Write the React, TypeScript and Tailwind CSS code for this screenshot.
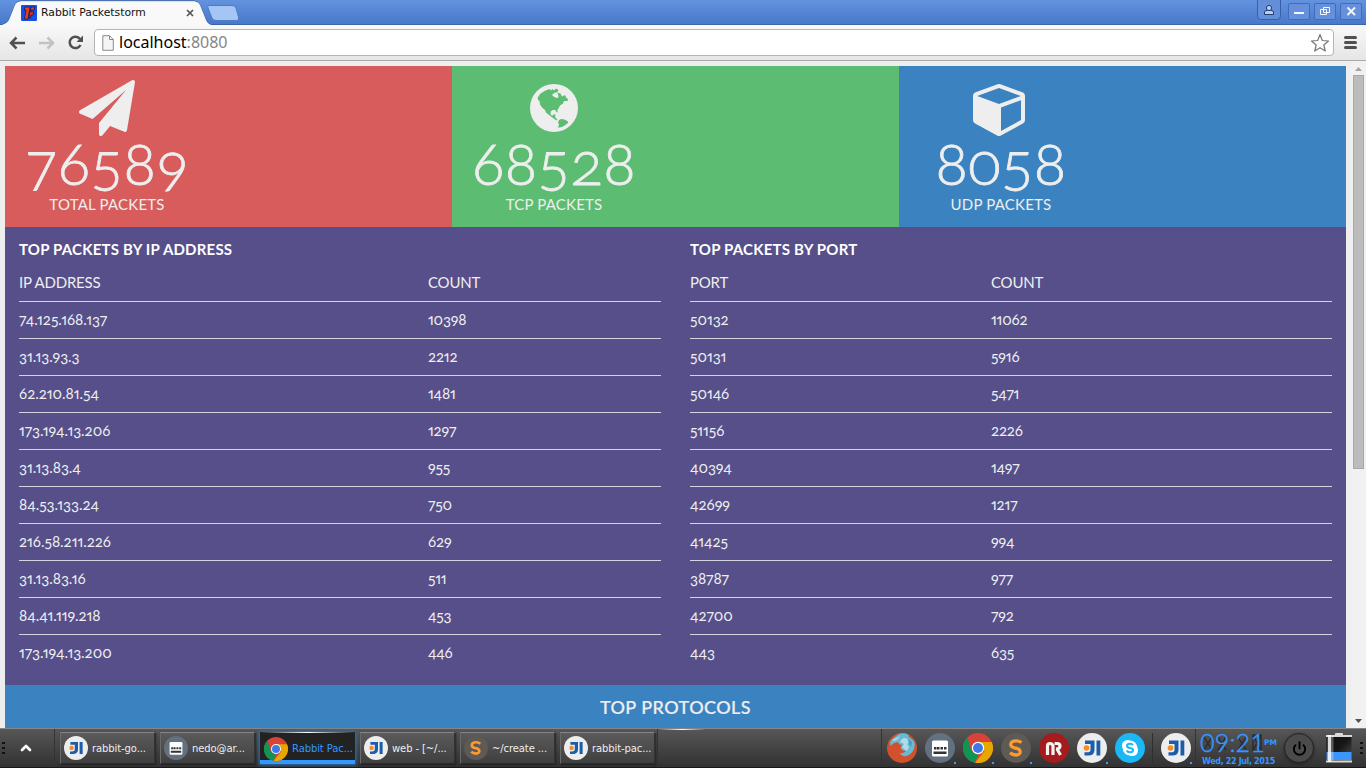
import type { ReactNode } from "react";
import { ChevronUp, Power } from "lucide-react";

const ipRows = [
  ["74.125.168.137", "10398"],
  ["31.13.93.3", "2212"],
  ["62.210.81.54", "1481"],
  ["173.194.13.206", "1297"],
  ["31.13.83.4", "955"],
  ["84.53.133.24", "750"],
  ["216.58.211.226", "629"],
  ["31.13.83.16", "511"],
  ["84.41.119.218", "453"],
  ["173.194.13.200", "446"],
];

const portRows = [
  ["50132", "11062"],
  ["50131", "5916"],
  ["50146", "5471"],
  ["51156", "2226"],
  ["40394", "1497"],
  ["42699", "1217"],
  ["41425", "994"],
  ["38787", "977"],
  ["42700", "792"],
  ["443", "635"],
];

function PlaneIcon() {
  return (
    <svg viewBox="0 0 1792 1792" className="h-14 w-14" fill="#eee">
      <path d="M1764 11q33 24 27 64l-256 1536q-5 29-32 45-14 8-31 8-11 0-24-5l-453-185-242 295q-18 23-49 23-13 0-22-4-19-7-30.500-23.500t-11.500-36.500v-349l864-1059-1069 925-395-162q-37-14-40-55-2-40 32-59l1664-960q15-9 32-9 20 0 36 11z" />
    </svg>
  );
}

function GlobeIcon() {
  return (
    <svg viewBox="0 0 48 48" className="mt-1 mb-1 h-12 w-12">
      <circle cx="24" cy="24" r="24" fill="#eee" />
      <path
        fill="#5cbd72"
        d="M7.500 14L10 10L14.500 7L17 6L19.500 5L21 6.500L22.500 5L24 6.500L26 4.500L28.500 6L27.500 8L24 9L22 11L23.500 12.500L26.500 14L28.500 13.500L28 10L27 8.500L30.500 9.500L32 12.500L35 11L36.500 14L38 15L37.500 17L34 17L33 19.500L30 21.500L28.500 24.500L27.500 25.500L27.500 28.500L26.300 28L25.500 26L22.500 26L20.700 27.500L20.500 30.500L22.300 31.700L24 30.300L25.500 30.500L25 33L27.300 35.500L26.500 36.500L23 34L19 31L16 28.500L15 26L12 23.500L10 20.500L9.500 17L8.500 16.500Z"
      />
      <path fill="#5cbd72" d="M29 36L31 35L34.500 35.500L38 37.500L38 39L34.500 41.500L32 43L28 43.800L29 40.500L28 38.500Z" />
    </svg>
  );
}

function CubeIcon() {
  return (
    <svg viewBox="0 0 1792 1792" className="h-14 w-14" fill="#eee">
      <path d="M896 1629l640-349v-636l-640 233v752zm-64-865l698-254-698-254-698 254zm832-252v768q0 35-18 65t-49 47l-704 384q-28 16-61 16t-61-16l-704-384q-31-17-49-47t-18-65v-768q0-40 23-73t61-47l704-256q22-8 44-8t44 8l704 256q38 14 61 47t23 73z" />
    </svg>
  );
}

function Stat({ icon, value, label, color }: { icon: ReactNode; value: string; label: string; color: string }) {
  return (
    <div className={`h-[161px] w-[447px] ${color}`}>
      <div className="flex w-[204px] flex-col items-center pt-3.5 text-[#eee]">
        {icon}
        <div className="-mt-[3px] h-[60px] text-[60px] leading-[58px] font-light tracking-[0.4px] oldstyle-nums [-webkit-text-stroke:0.8px_#eee]">{value}</div>
        <div className="mt-px text-[15px] leading-5 tracking-[0.2px]">{label}</div>
      </div>
    </div>
  );
}

function PacketTable({ title, heads, rows, first }: { title: string; heads: string[]; rows: string[][]; first: string }) {
  return (
    <div className="w-[642px]">
      <h2 className="h-[38px] pt-3 text-[15px] leading-5 font-bold tracking-[0.2px] text-white">{title}</h2>
      <div className="flex h-[37px] items-center border-b border-[#d5d3df] pb-[2px] text-[15px] tracking-[-0.2px]">
        <div className={first}>{heads[0]}</div>
        <div>{heads[1]}</div>
      </div>
      {rows.map((r) => (
        <div key={r[0]} className="flex h-[37px] items-center border-b border-[#d5d3df] pb-px text-[15px] oldstyle-nums proportional-nums last:border-transparent">
          <div className={`${first} tracking-[-0.05px]`}>{r[0]}</div>
          <div className="tracking-[-0.2px]">{r[1]}</div>
        </div>
      ))}
    </div>
  );
}

function AppIcon({ kind, size }: { kind: string; size: string }) {
  return (
    <svg viewBox="0 0 30 30" className={`shrink-0 ${size}`}>
      {kind === "idea" && (
        <g>
          <circle cx="15" cy="15" r="15" fill="#ededed" />
          <path d="M8 7.500H17.500V17Q17.500 23 10 22.500H7.500V19.300H10Q13.500 19.300 13.500 17V11H8ZM19.500 7.500H23.300V22.500H19.500Z" fill="#1a5dab" />
          <circle cx="9.500" cy="15" r="2.800" fill="#f78b28" />
        </g>
      )}
      {kind === "term" && (
        <g>
          <circle cx="15" cy="15" r="15" fill="#63707f" />
          <rect x="7" y="7.500" width="16" height="16" rx="1.500" fill="#fff" />
          <path d="M9 16.500h2.500v-2.500h-2.500zM12 16.500h2.500v-2.500h-2.500zM15.500 16.500h2.500v-2.500h-2.500zM19 16.500h2.500v-2.500h-2.500zM8.500 18.500h13v2.500h-13z" fill="#333" />
        </g>
      )}
      {kind === "chrome" && (
        <g>
          <circle cx="15" cy="15" r="15" fill="#d94337" />
          <path d="M4.500 4.300L8.500 18.500L15 22L12 29.700A15 15 0 0 1 4.500 4.300Z" fill="#109451" />
          <path d="M15 9H28.700A15 15 0 0 1 12 29.700L21.500 18Z" fill="#e6a800" />
          <circle cx="15" cy="15" r="6.200" fill="#fff" />
          <circle cx="15" cy="15" r="5" fill="#3c79ea" />
        </g>
      )}
      {kind === "sublime" && (
        <g>
          <circle cx="15" cy="15" r="15" fill="#5e5a55" />
          <path d="M20.500 9.500Q18 7.800 15 7.800C8.500 7.800 8 14 14 15C21 16 20.500 22 15 22Q11.500 22 9 19.800" fill="none" stroke="#fb9b31" strokeWidth="3.300" />
        </g>
      )}
      {kind === "mendeley" && (
        <g>
          <circle cx="15" cy="15" r="15" fill="#a61b1b" />
          <path d="M8.500 22V13Q8.500 10.500 11 10.500T14 13V22M15.500 10.500H18Q21 10.500 21 13T18 16H17M18 16L21.500 22" fill="none" stroke="#f4f4f4" strokeWidth="3.200" />
        </g>
      )}
      {kind === "firefox" && (
        <g>
          <circle cx="15" cy="15" r="15" fill="#d1512d" />
          <path d="M3 9Q7 4 12 1Q17 -.500 21 1.500L22 4L27 8Q29 13 26 18Q22 24 16 23L12.500 20.500L16 20L19 18L16 17.500L13.500 15L15 12L12 11L11 9L7 10L3.500 13Z" fill="#67bad3" />
          <path d="M15 6Q18 4 20 6L22 9L20 11L22 14L20 18L17 16L15 14L17 11L13 9Z" fill="#b0dcea" />
          <path d="M5 7L13 3L11 6L7 8Z" fill="#a5dcea" />
          <path d="M21 6L25 9L24 14L22 11Z" fill="#489dbd" />
        </g>
      )}
      {kind === "skype" && (
        <g>
          <circle cx="15" cy="15" r="15" fill="#1cb7f5" />
          <circle cx="12.500" cy="12.500" r="5.500" fill="#fff" />
          <circle cx="17.500" cy="17.500" r="5.500" fill="#fff" />
          <circle cx="15" cy="15" r="7.400" fill="#fff" />
          <path d="M18 12Q17 10.800 15 10.800C11 10.800 11 14.300 15 15C19 15.600 19 19.200 15 19.200Q12.500 19.200 11.700 17.500" fill="none" stroke="#1cb7f5" strokeWidth="2" />
        </g>
      )}
    </svg>
  );
}

function Task({ kind, text, active }: { kind: string; text: string; active?: boolean }) {
  return (
    <div
      className={
        active
          ? "flex h-8 w-[95px] flex-col bg-[#222] text-[#3497ff] shadow-[0_0_3px_1px_#2472bd]"
          : "flex h-8 w-[95px] items-center gap-1 border border-t-[#858585] border-r-[#333] border-b-[#2b2b2b] border-l-[#6a6a6a] bg-linear-to-b from-[#5b5b5b] to-[#3f3f3f] pl-[3px] text-[#eee] shadow-[1px_1px_2px_#222]"
      }
    >
      {active ? (
        <>
          <div className="h-px bg-linear-to-r from-transparent via-white to-transparent" />
          <div className="z-10 flex h-[27px] items-center gap-1 pl-1">
            <AppIcon kind={kind} size="mt-1 h-6 w-6" />
            <span className="pt-1 font-['DejaVu_Sans'] text-[10px] tracking-[-0.1px] whitespace-nowrap">{text}</span>
          </div>
          <div className="h-1 bg-[#3497ff]" />
        </>
      ) : (
        <>
          <AppIcon kind={kind} size="h-6 w-6" />
          <span className="overflow-hidden font-['DejaVu_Sans'] text-[10px] tracking-[-0.1px] whitespace-nowrap">{text}</span>
        </>
      )}
    </div>
  );
}

function Tray({ kind, dot }: { kind: string; dot?: boolean }) {
  return (
    <div className="relative h-[30px] w-[30px] shrink-0">
      <AppIcon kind={kind} size="h-[30px] w-[30px]" />
      {dot && <i className="absolute right-[-1px] bottom-[-1px] h-0.5 w-0.5 bg-[#3b9bff]" />}
    </div>
  );
}

function Grip() {
  return (
    <div className="flex w-[3px] flex-col gap-[3px]">
      <i className="h-[2px] w-[3px] bg-[#111]" />
      <i className="h-[2px] w-[3px] bg-[#111]" />
      <i className="h-[2px] w-[3px] bg-[#111]" />
    </div>
  );
}

function WindowControls() {
  return (
    <svg viewBox="0 0 110 24" className="h-6 w-[110px]" fill="none">
      <path d="M1.500 0V16Q1.500 19.500 5 19.500H21Q24.500 19.500 24.500 16V0" fill="#648fd8" stroke="#3660a8" />
      <g fill="#6790dc" stroke="#426cb9">
        <rect x="32.500" y="3.500" width="21" height="16" rx="1.500" />
        <rect x="58.500" y="3.500" width="21" height="16" rx="1.500" />
        <rect x="84.500" y="3.500" width="21" height="16" rx="1.500" />
      </g>
      <path d="M8.500 14.500V12Q9 10.500 11 10.500H15Q17.500 10.500 17.500 12V14.500Z" fill="#b8d0f5" stroke="#203c72" />
      <circle cx="13" cy="8" r="2.600" fill="#b8d0f5" stroke="#203c72" />
      <path d="M38 13H48" stroke="#f4f8ff" strokeWidth="2" />
      <path d="M67.500 7.500H73.500V12.500H67.500ZM64.500 9.500H70.500V14.500H64.500Z" stroke="#f4f8ff" />
      <path d="M91.500 7.500L99 15M99 7.500L91.500 15" stroke="#f4f8ff" strokeWidth="1.800" />
    </svg>
  );
}

export default function App() {
  return (
    <div className="flex h-[768px] w-[1366px] flex-col overflow-hidden bg-[#eee] font-['Lato',sans-serif] text-[#eee]">
      <header className="flex h-[25px] shrink-0 justify-between border-b border-[#3c65a9] bg-linear-to-b from-[#6393de] to-[#4878ca]">
        <div className="grid h-[25px] w-[245px] grid-cols-1 grid-rows-1">
          <svg viewBox="0 0 245 25" className="col-start-1 row-start-1 h-[25px] w-[245px]">
            <path d="M0 25Q7 24 9 20L15 5Q17 .800 21 .800H194Q198 .800 200 5L206 20Q208 25 214 25Z" fill="#f9f9f9" stroke="#345b9d" />
            <path d="M0 25.500Q7 24 9 20L15 5Q17 1.500 21 1.500H194Q198 1.500 200 5L206 20Q208 25 214 25.500Z" fill="#f9f9f9" />
            <path d="M209 5.500H232Q235 5.500 236 8L238.500 17Q239.500 20.500 236.500 20.500H216Q213 20.500 212 18L208 8Q207 5.500 209 5.500Z" fill="#a5c5f5" stroke="#4e7bc2" />
          </svg>
          <div className="col-start-1 row-start-1 flex items-center pl-[21px]">
            <svg viewBox="0 0 16 16" className="h-4 w-4">
              <rect width="16" height="16" rx="1" fill="#1750e4" />
              <path d="M4 2H9L7 14H3L4 11L5 5H3ZM10 2H14L13 5H10.500L10 7H13L12 10H10L9.500 13H8Z" fill="#ef3a20" stroke="#19194b" strokeWidth=".8" />
            </svg>
            <span className="ml-1 w-[145px] pt-px font-['DejaVu_Sans'] text-[10.8px] leading-none text-[#111]">Rabbit Packetstorm</span>
            <svg viewBox="0 0 8 8" className="h-2 w-2"><path d="M1 1L7 7M7 1L1 7" stroke="#555" strokeWidth="1.700" /></svg>
          </div>
        </div>
        <WindowControls />
      </header>
      <div className="flex h-9 shrink-0 items-center border-b border-[#a9a9a9] bg-linear-to-b from-[#f8f8f8] to-[#e6e6e6]">
        <svg viewBox="0 0 84 24" className="ml-2 h-6 w-[84px]" fill="none">
          <g strokeWidth="2.500">
            <path d="M17 12H3M8.500 6.500L3 12L8.500 17.500" stroke="#505050" />
            <path d="M31 12H45M39.500 6.500L45 12L39.500 17.500" stroke="#c2c2c2" />
            <path d="M72 8A5.700 5.700 0 1 0 72.500 14" stroke="#505050" />
          </g>
          <path d="M75 4.500V11H68.500Z" fill="#505050" />
        </svg>
        <div className="ml-0.5 flex h-[27px] w-[1240px] items-center rounded-sm border border-[#b4b4b4] bg-white">
          <svg viewBox="0 0 12 16" className="ml-[7px] h-4 w-3"><path d="M.800.700H7.500L11.300 4.500V15.300H.800ZM7.500.700V4.500H11.300" fill="#f5f5f5" stroke="#8a8a8a" /></svg>
          <span className="ml-[5px] grow pb-px font-['Noto_Sans'] text-base leading-6 text-black">localhost<span className="text-[#858585]">:8080</span></span>
          <svg viewBox="0 0 20 20" className="mr-[3px] h-5 w-5"><path d="M10 1.500L12.300 7.500L18.500 8L13.800 12L15.300 18L10 14.800L4.700 18L6.200 12L1.500 8L7.700 7.500Z" fill="#fff" stroke="#777" strokeWidth="1.200" strokeLinejoin="round" /></svg>
        </div>
        <div className="ml-2.5 flex w-[13px] flex-col gap-0.5">
          <i className="h-[3px] rounded-sm bg-[#505050]" />
          <i className="h-[3px] rounded-sm bg-[#505050]" />
          <i className="h-[3px] rounded-sm bg-[#505050]" />
        </div>
      </div>
      <div className="flex h-[667px] shrink-0 justify-between overflow-hidden">
        <main className="ml-[5px] w-[1341px] pt-[5px]">
          <div className="flex">
            <Stat icon={<PlaneIcon />} value="76589" label="TOTAL PACKETS" color="bg-[#d85c5c]" />
            <Stat icon={<GlobeIcon />} value="68528" label="TCP PACKETS" color="bg-[#5cbd72]" />
            <Stat icon={<CubeIcon />} value="8058" label="UDP PACKETS" color="bg-[#3b83c0]" />
          </div>
          <div className="flex h-[458px] gap-[29px] bg-[#564f8a] px-3.5">
            <PacketTable title="TOP PACKETS BY IP ADDRESS" heads={["IP ADDRESS", "COUNT"]} rows={ipRows} first="w-[409px]" />
            <PacketTable title="TOP PACKETS BY PORT" heads={["PORT", "COUNT"]} rows={portRows} first="w-[301px]" />
          </div>
          <div className="h-[43px] bg-[#3b83c0] pt-2.5 text-center text-lg leading-6 font-medium tracking-[0.45px] [-webkit-text-stroke:0.2px_#eee]">TOP PROTOCOLS</div>
        </main>
        <div className="flex w-[15px] flex-col items-center bg-[#f1f1f1]">
          <svg viewBox="0 0 15 14" className="h-3.5 w-[15px]"><path d="M4 10L7.500 6L11 10Z" fill="#a3a3a3" /></svg>
          <div className="h-[394px] w-[11px] border border-[#a8a8a8] bg-[#bcbcbc]" />
          <svg viewBox="0 0 15 14" className="mt-auto h-3.5 w-[15px]"><path d="M4 5L7.500 9L11 5Z" fill="#505050" /></svg>
        </div>
      </div>
      <footer className="flex h-10 items-center border-t border-b border-t-[#858585] border-b-[#1c1719] bg-linear-to-b from-[#575757] to-[#323232]">
        <div className="flex h-full w-[55px] shrink-0 items-center border-r border-[#333] pl-0.5">
          <Grip />
          <ChevronUp className="ml-[13px] h-4 w-4 text-white" strokeWidth={4} />
        </div>
        <div className="ml-[5px] flex shrink-0 gap-[5px]">
          <Task kind="idea" text="rabbit-go..." />
          <Task kind="term" text="nedo@ar..." />
          <Task kind="chrome" text="Rabbit Pac..." active />
          <Task kind="idea" text="web - [~/..." />
          <Task kind="sublime" text="~/create ..." />
          <Task kind="idea" text="rabbit-pac..." />
        </div>
        <div className="ml-[2px] h-full w-px shrink-0 bg-[#333]" />
        <div className="h-full w-[223px] shrink-0">
          <div className="h-px w-12 bg-linear-to-r from-transparent via-white to-transparent" />
        </div>
        <div className="flex h-full items-center gap-2 border-l border-[#333] pl-[5px]">
          <Tray kind="firefox" />
          <Tray kind="term" dot />
          <Tray kind="chrome" dot />
          <Tray kind="sublime" dot />
          <Tray kind="mendeley" />
          <Tray kind="idea" dot />
          <Tray kind="skype" />
        </div>
        <div className="mr-2 ml-[7px] h-[30px] w-px shrink-0 bg-[#2f2f2f]" />
        <Tray kind="idea" dot />
        <div className="ml-1 flex h-full w-[89px] shrink-0 flex-col border-l border-[#333] pl-1 font-['DejaVu_Sans'] text-[#3497ff]">
          <div className="mt-0.5 grid h-[26px] grid-cols-[64px_1fr] items-start">
            <svg viewBox="0 0 64 24" className="col-start-1 row-start-1 h-6 w-16" fill="none" stroke="#2b2b2b" strokeWidth="1.400">
              <path d="M4 6L12 19M12 6L4 19M18 6L26 19M26 6L18 19M38 6L46 19M46 6L38 19M53 4H61V20H53ZM53 4L61 20M61 4L53 20" />
            </svg>
            <span className="col-start-1 row-start-1 font-['Lato'] text-[25px] leading-[23px] font-light tracking-[0.2px] [-webkit-text-stroke:0.5px_#3497ff]">09:21</span>
            <span className="col-start-2 pt-2 text-[7.5px] leading-none font-bold">PM</span>
          </div>
          <div className="pl-0.5 text-[8px] leading-[9px] font-bold tracking-[-0.35px] whitespace-nowrap">Wed, 22 Jul, 2015</div>
        </div>
        <div className="flex h-[30px] w-[30px] shrink-0 items-center justify-center rounded-full border border-[#252525] bg-[#4b4b4b] shadow-[0_1px_3px_#222]">
          <Power className="h-[15px] w-[15px] text-black" strokeWidth={3} />
        </div>
        <svg viewBox="0 0 28 32" className="ml-[11px] h-8 w-7 shrink-0">
          <defs>
            <linearGradient id="cell" x1="0" y1="0" x2="1" y2="1"><stop stopColor="#101010" /><stop offset=".5" stopColor="#161616" /><stop offset="1" stopColor="#555" /></linearGradient>
          </defs>
          <rect x="10" y="1" width="8" height="3" rx="1" fill="#ddd" />
          <rect x="1.500" y="3" width="25" height="27" rx="1" fill="url(#cell)" />
          <path d="M1.500 20H26.500V28H1.500Z" fill="#3a96fb" />
          <path d="M1 3H27V5H1ZM1 28.500H27V30.500H1Z" fill="#d8d8d8" />
          <path d="M4.500 3V30" stroke="#fff" strokeWidth="3.500" opacity=".85" />
          <path d="M7.500 4V29" stroke="#fff" strokeWidth="2" opacity=".3" />
        </svg>
        <div className="ml-[7px]"><Grip /></div>
      </footer>
    </div>
  );
}
